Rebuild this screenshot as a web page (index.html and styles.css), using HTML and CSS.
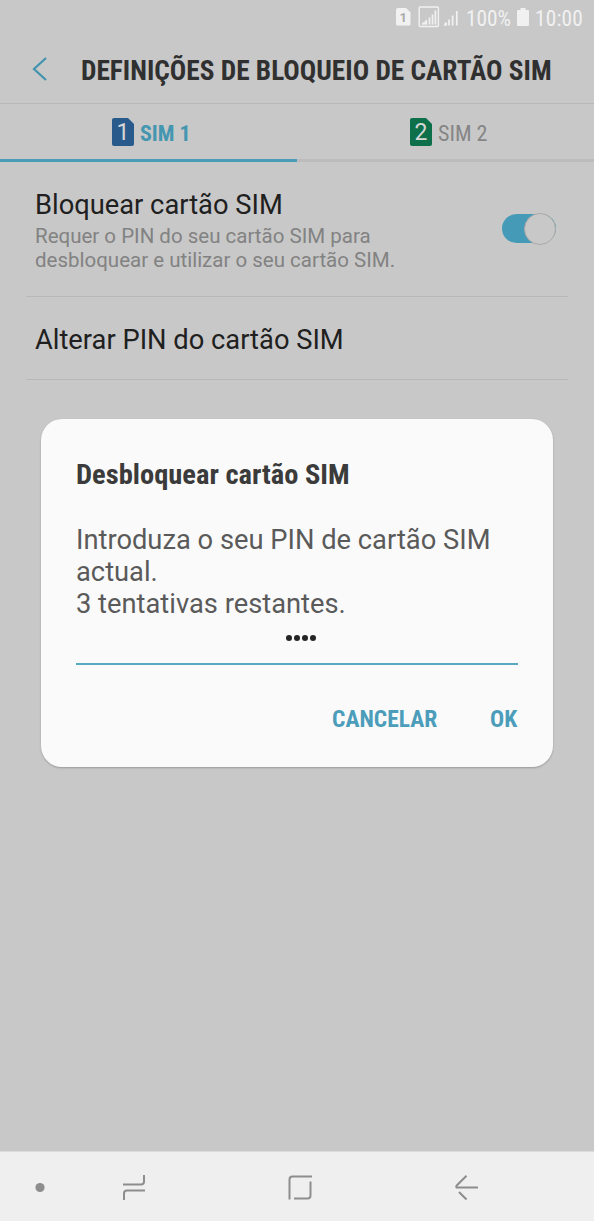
FILE: index.html
```html
<!DOCTYPE html>
<html lang="pt">
<head>
<meta charset="utf-8">
<title>Definições de bloqueio de cartão SIM</title>
<link rel="stylesheet" href="styles.css">
</head>
<body>
<div class="phone">
  <div class="status">
    <svg class="status-icons" width="68" height="24" viewBox="0 0 68 24">
      <path class="fill" d="M3 1h8l4.500 4.500V17q0 1.500-1.500 1.500H2.500Q1 18.500 1 17V3q0-2 2-2z"/>
      <text class="status-sim" x="4.500" y="15">1</text>
      <rect class="line" x="24.200" y="0" width="19.200" height="19.500" rx="1"/>
      <path class="bars" d="M28 17.500v-2M31.300 17.500v-4.500M34.500 17.500v-7M37.500 17.500v-10M40.400 17.500v-14"/>
      <path class="bars" d="M50.500 18.500v-3M54 18.500v-6M57.600 18.500v-10M61.800 18.500v-14.500"/>
      <path class="fill" d="M48 18.500l4-3v3zM27 17.500l4-4v4z"/>
    </svg>
    <span class="percent"><span class="fit">100%</span></span>
    <svg class="battery" width="12" height="18" viewBox="0 0 12 18"><path class="fill" d="M3.500 0h5v2H11q1 0 1 1v14q0 1-1 1H1q-1 0-1-1V3q0-1 1-1h2.500z"/></svg>
    <span class="time"><span class="fit">10:00</span></span>
  </div>
  <header class="header">
    <svg class="back" width="16" height="24" viewBox="0 0 16 24"><path d="M14 1L2 12l12 11"/></svg>
    <h1 class="heading"><span class="fit">DEFINIÇÕES DE BLOQUEIO DE CARTÃO SIM</span></h1>
  </header>
  <nav class="tabs">
    <div class="tab tab-active">
      <svg width="22" height="28" viewBox="0 0 22 28"><path class="sim-blue" d="M2 0h14l6 6v20q0 2-2 2H2q-2 0-2-2V2q0-2 2-2z"/><text class="sim-number" x="11" y="22">1</text></svg>
      <span class="tab-label"><span class="fit">SIM 1</span></span>
    </div>
    <div class="tab">
      <svg width="22" height="28" viewBox="0 0 22 28"><path class="sim-green" d="M2 0h14l6 6v20q0 2-2 2H2q-2 0-2-2V2q0-2 2-2z"/><text class="sim-number" x="11" y="22">2</text></svg>
      <span class="tab-label"><span class="fit">SIM 2</span></span>
    </div>
  </nav>
  <main class="settings">
    <section class="row row-lock">
      <div>
        <h2 class="row-title">Bloquear cartão SIM</h2>
        <p class="row-note">Requer o PIN do seu cartão SIM para<br>desbloquear e utilizar o seu cartão SIM.</p>
      </div>
      <div class="toggle"><div class="knob"></div></div>
    </section>
    <section class="row row-pin"><h2 class="row-title">Alterar PIN do cartão SIM</h2></section>
  </main>
  <div class="dialog">
    <h2 class="dialog-title"><span class="fit">Desbloquear cartão SIM</span></h2>
    <p class="dialog-text">Introduza o seu PIN de cartão SIM<br>actual.<br>3 tentativas restantes.</p>
    <div class="pin"><i></i><i></i><i></i><i></i></div>
    <div class="actions">
      <span class="cancel"><span class="fit">CANCELAR</span></span>
      <span class="ok"><span class="fit">OK</span></span>
    </div>
  </div>
  <footer class="navbar">
    <svg width="594" height="69" viewBox="0 0 594 69">
      <circle cx="40" cy="35.500" r="4.600"/>
      <path d="M123 32.500h18q3 0 3-3V23M145 38.500h-18q-3 0-3 3V48"/>
      <path d="M289.500 47.500V27.500q0-3 3-3H312M310.500 29.500v14q0 3-3 3H294"/>
      <path d="M478 35.600h-20q-3 0-1-2.400l9.500-9.500M459 40l7.500 7.500"/>
    </svg>
  </footer>
</div>
</body>
</html>
```
FILE: styles.css
```css
* { box-sizing: border-box; }
body { margin: 0; background: #c8c8c8; font-family: Roboto, "Liberation Sans", sans-serif; }
h1, h2, p { margin: 0; font-weight: 400; }
svg { display: block; flex: none; }
.phone { position: relative; display: flex; flex-direction: column; height: 1221px; overflow: hidden; }
.fit { display: inline-block; white-space: nowrap; font-stretch: 75%; }
.status { display: flex; height: 36px; padding: 7px 0 0 395px; color: #f1f1f1; font-size: 21.300px; line-height: 23px; }
.status-icons { width: 68px; overflow: visible; }
.fill { fill: #f1f1f1; }
.line { fill: none; stroke: #f1f1f1; stroke-width: 1.400; }
.bars { fill: none; stroke: #f1f1f1; stroke-width: 1.700; }
.status-sim { font-size: 13px; font-weight: 700; fill: #aaa; }
.percent { width: 46px; margin-left: 3px; }
.battery { margin: 1px 0 0 5px; }
.time { width: 50px; margin-left: 6px; letter-spacing: 0.200px; }
.header { display: flex; height: 68px; padding: 21px 0 0 32px; border-bottom: 1px solid #b9b9b9; }
.back { width: 16px; }
.back path { fill: none; stroke: #4294ae; stroke-width: 2.200; }
.heading { width: 480px; margin-left: 33px; margin-top: -3px; font-size: 27.300px; line-height: 34px; font-weight: 700; color: #303030; }
.tabs { display: flex; height: 58px; }
.tab { display: flex; width: 297px; padding: 14px 0 0 112px; gap: 6px; border-bottom: 3px solid #bcbcbc; color: #858585; font-size: 22px; line-height: 31px; }
.tab + .tab { padding-left: 113px; }
.tab-active { border-color: #4a9db8; color: #4596b0; font-weight: 700; }
.sim-blue { fill: #285a8c; }
.sim-green { fill: #0e704a; }
.sim-number { font-size: 23px; font-weight: 400; fill: #d6d6d6; text-anchor: middle; }
.settings { flex: 1; padding: 0 26px; }
.row { display: flex; justify-content: space-between; padding: 0 12px 0 9px; border-bottom: 1px solid #b8b8b8; }
.row-lock { height: 135px; padding-top: 26px; }
.row-pin { height: 83px; padding-top: 26px; }
.row-title { font-size: 27.300px; line-height: 34px; color: #202020; }
.row-note { margin-top: 2px; font-size: 20.500px; line-height: 24px; color: #828282; }
.toggle { display: flex; justify-content: flex-end; align-items: center; width: 54px; height: 29px; margin-top: 26px; border-radius: 15px; background: #459ab7; }
.knob { width: 32px; height: 32px; flex: none; border: 1px solid #a9a9a9; border-radius: 50%; background: #c8c8c8; }
.dialog { position: absolute; left: 41px; top: 419px; width: 512px; height: 348px; padding: 39px 35px 0; border-radius: 21px; background: #fafafa; box-shadow: 0 1px 2px #999; }
.dialog-title { font-size: 28.500px; line-height: 34px; font-weight: 700; color: #3b3b3b; }
.dialog-text { margin-top: 32px; font-size: 27.300px; line-height: 32px; color: #5a5a5a; }
.pin { display: flex; justify-content: center; gap: 2.200px; height: 45px; padding: 15px 0 0 8px; border-bottom: 2px solid #56a8c3; }
.pin i { width: 6px; height: 6px; border-radius: 50%; background: #252525; }
.actions { display: flex; justify-content: flex-end; margin-top: 39px; font-size: 23.500px; line-height: 30px; font-weight: 700; color: #4b9dba; }
.cancel { width: 106px; margin-right: 52px; }
.ok { width: 28px; }
.navbar { height: 70px; background: #efefef; border-top: 1px solid #dcdcdc; }
.navbar path { fill: none; stroke: #8d8d8d; stroke-width: 2; }
.navbar circle { fill: #8d8d8d; }
```
